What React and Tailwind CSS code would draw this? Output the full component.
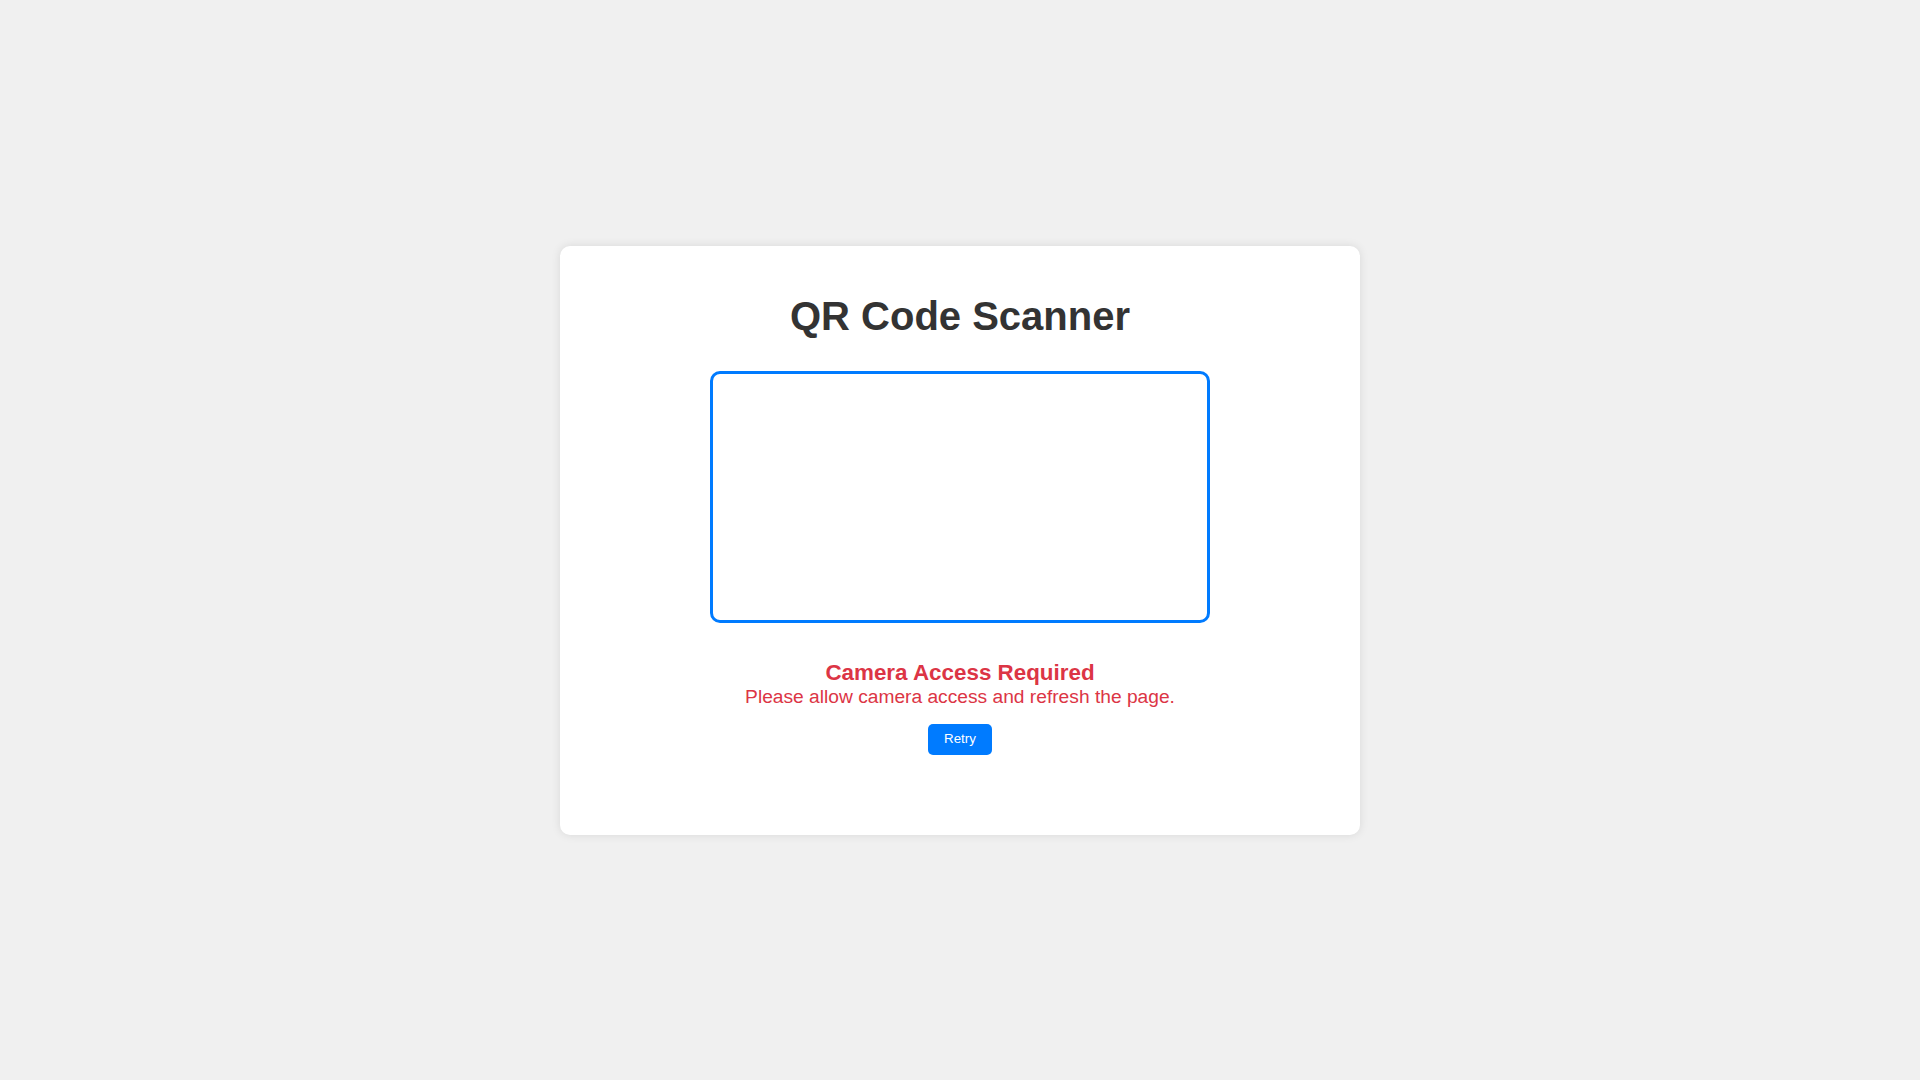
export default function App() {
  const retry = () => {
    window.location.reload();
  };

  return (
    <div className="min-h-screen flex items-center justify-center bg-[#f0f0f0] font-['Liberation_Sans',Arial,sans-serif]">
      <div className="w-[800px] bg-white rounded-[10px] shadow-[0_0_10px_rgba(0,0,0,0.1)] p-[20px] text-center">
        <h1 className="mt-[27px] mb-[32px] text-[40px] leading-[46px] font-bold text-[#333]">
          QR Code Scanner
        </h1>
        <div className="mx-auto w-[500px] h-[252px] border-[3px] border-[#007bff] rounded-[10px]"></div>
        <h2 className="mt-[37px] text-[22.4px] leading-[25px] font-bold text-[#dc3545]">
          Camera Access Required
        </h2>
        <p className="mt-[1px] text-[19.2px] leading-[22px] text-[#dc3545]">
          Please allow camera access and refresh the page.
        </p>
        <button
          onClick={retry}
          className="mt-[16px] mb-[60px] h-[31px] px-[16px] bg-[#007bff] text-white text-[13.33px] rounded-[5px] cursor-pointer"
        >
          Retry
        </button>
      </div>
    </div>
  );
}
